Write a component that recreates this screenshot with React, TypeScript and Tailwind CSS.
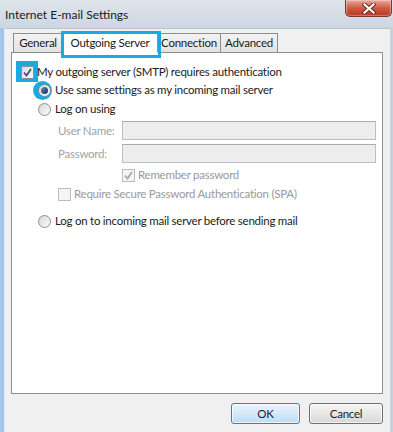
import React from "react";

const font = { fontFamily: 'Lato, "Open Sans", sans-serif' };

function Check({ disabled }: { disabled?: boolean }) {
  return (
    <svg width="9" height="9" viewBox="0 0 9 9">
      <path
        d="M1 4.5 L3.5 7.5 L8 1"
        fill="none"
        stroke={disabled ? "#a8a8a8" : "#3d4f86"}
        strokeWidth="1.8"
      />
    </svg>
  );
}

function CheckBox({ checked, disabled }: { checked?: boolean; disabled?: boolean }) {
  return (
    <div
      className={
        "w-[13px] h-[13px] shrink-0 border flex items-center justify-center " +
        (disabled
          ? "border-[#bcbcbc] bg-[#f4f4f4]"
          : "border-[#8e8f8f] bg-gradient-to-br from-[#dcdcdc] to-[#fbfbfb]")
      }
    >
      {checked && <Check disabled={disabled} />}
    </div>
  );
}

function Radio({ checked }: { checked?: boolean }) {
  return (
    <div className="w-[13px] h-[13px] shrink-0 rounded-full border border-[#8e8f8f] bg-gradient-to-br from-[#d6d6d6] to-[#fcfcfc] flex items-center justify-center">
      {checked && (
        <div className="w-[7px] h-[7px] rounded-full bg-gradient-to-br from-[#6b8fb8] to-[#0f2f55]" />
      )}
    </div>
  );
}

function Input() {
  return (
    <div className="w-[254px] h-[19px] border border-[#b6c0ca] border-t-[#a3acb5] bg-[#ededed]" />
  );
}

export default function App() {
  return (
    <div
      className="w-[393px] h-[432px] flex flex-col overflow-hidden text-[11.5px] tracking-[-0.25px] text-[#1b1b1b] bg-[#d3dbe4] whitespace-nowrap"
      style={font}
    >
      {/* title bar */}
      <div className="h-[28px] shrink-0 flex items-start bg-gradient-to-b from-[#dfe4ea] to-[#cdd7e2]">
        <span className="ml-[5px] mt-[6px] text-[12px] tracking-normal text-[#1a1a1a]">
          Internet E-mail Settings
        </span>
        <div className="ml-auto mr-[1px] w-[47px] h-[17px] rounded-b-[5px] border border-t-0 border-[#7a3a30] bg-gradient-to-b from-[#e9a89a] via-[#cf5a44] to-[#b8341f] flex items-center justify-center shadow-[inset_0_0_1px_1px_rgba(255,255,255,0.35)]">
          <svg width="14" height="11" viewBox="0 0 14 11">
            <path d="M2.5 1.5 L11.5 9.5 M11.5 1.5 L2.5 9.5" stroke="#5a2a22" strokeWidth="4" strokeLinecap="square" />
            <path d="M2.5 1.5 L11.5 9.5 M11.5 1.5 L2.5 9.5" stroke="#ffffff" strokeWidth="2.2" strokeLinecap="square" />
          </svg>
        </div>
      </div>

      <div className="flex flex-1">
        {/* left frame */}
        <div className="w-[4px] bg-[#a2c6ec]" />
        <div className="w-[1px] bg-[#dbe7f4]" />
        {/* client area */}
        <div className="flex-1 flex flex-col bg-[#f0f0f0] border-t border-[#b9c3cc]">
          {/* tabs */}
          <div className="flex items-end ml-[8px] h-[24px] relative z-10 -mb-[1px]">
            <div className="w-[49px] h-[20px] border border-[#8e8f8f] border-r-0 bg-gradient-to-b from-[#f3f3f3] to-[#e2e2e2] flex items-center justify-center">
              General
            </div>
            <div className="relative w-[96px] h-[22px] border border-[#8e8f8f] border-b-white bg-white flex items-start justify-center pt-[2px]">
              Outgoing Server
              <div className="absolute -left-[2px] -top-[1px] w-[100px] h-[27px] border-[3px] border-[#19aae0]" />
            </div>
            <div className="w-[63px] h-[20px] border border-[#8e8f8f] border-l-0 bg-gradient-to-b from-[#f3f3f3] to-[#e2e2e2] flex items-center justify-center">
              Connection
            </div>
            <div className="w-[57px] h-[20px] border border-[#8e8f8f] border-l-0 bg-gradient-to-b from-[#f3f3f3] to-[#e2e2e2] flex items-center justify-center">
              Advanced
            </div>
          </div>

          {/* panel */}
          <div className="ml-[6px] w-[372px] h-[342px] bg-white border border-[#8e8f8f] flex flex-col">
            <div className="relative mt-[9px] h-[20px] flex items-center pl-[9px] gap-[3px]">
              <div className="absolute left-[4px] -top-[1px] w-[22px] h-[21px] bg-[#19aae0]" />
              <div className="relative">
                <CheckBox checked />
              </div>
              <span className="relative">My outgoing server (SMTP) requires authentication</span>
            </div>
            <div className="relative mt-[-2px] h-[20px] flex items-center pl-[26px] gap-[4px]">
              <div className="absolute left-[21px] top-[1px] w-[19px] h-[19px] rounded-full bg-[#19aae0]" />
              <div className="relative">
                <Radio checked />
              </div>
              <span className="relative">Use same settings as my incoming mail server</span>
            </div>
            <div className="h-[20px] mt-[-1px] flex items-center pl-[26px] gap-[4px]">
              <Radio />
              <span>Log on using</span>
            </div>
            <div className="mt-[2px] h-[19px] flex items-center pl-[46px]">
              <span className="w-[64px] text-[#a3a3a3]">User Name:</span>
              <Input />
            </div>
            <div className="mt-[4px] h-[19px] flex items-center pl-[46px]">
              <span className="w-[64px] text-[#a3a3a3]">Password:</span>
              <Input />
            </div>
            <div className="mt-[5px] h-[14px] flex items-center pl-[110px] gap-[3px]">
              <CheckBox checked disabled />
              <span className="text-[#9a9a9a]">Remember password</span>
            </div>
            <div className="mt-[5px] h-[14px] flex items-center pl-[46px] gap-[3px]">
              <CheckBox disabled />
              <span className="text-[#9a9a9a]">Require Secure Password Authentication (SPA)</span>
            </div>
            <div className="mt-[10px] h-[20px] flex items-center pl-[26px] gap-[4px]">
              <Radio />
              <span>Log on to incoming mail server before sending mail</span>
            </div>
          </div>

          {/* buttons */}
          <div className="mt-[9px] flex justify-end gap-[9px] mr-[7px]">
            <div className="w-[69px] h-[21px] rounded-[3px] border border-[#3c7fb1] bg-gradient-to-b from-[#eaf4fc] to-[#c2dcf2] flex items-center justify-center shadow-[inset_0_0_0_1px_rgba(255,255,255,0.7)]">
              OK
            </div>
            <div className="w-[74px] h-[21px] rounded-[3px] border border-[#707070] bg-gradient-to-b from-[#f6f6f6] to-[#d8d8d8] flex items-center justify-center shadow-[inset_0_0_0_1px_rgba(255,255,255,0.7)]">
              Cancel
            </div>
          </div>
        </div>
        {/* right frame */}
        <div className="w-[3px] bg-[#c9d2dc]" />
      </div>
    </div>
  );
}
